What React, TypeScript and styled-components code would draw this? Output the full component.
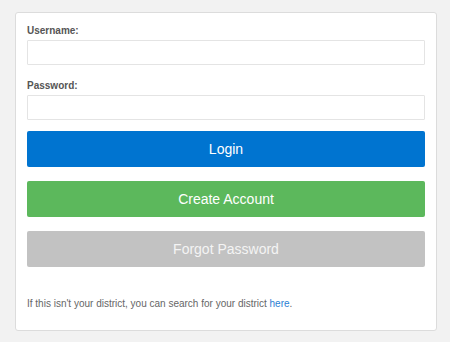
import styled, { createGlobalStyle } from "styled-components";

const GlobalStyle = createGlobalStyle`
  html, body {
    margin: 0;
    padding: 0;
    background: #f2f2f2;
    font-family: "Liberation Sans", Arial, Helvetica, sans-serif;
  }
`;

const Page = styled.div`
  padding: 12px 13px 12px 15px;
`;

const Card = styled.form`
  background: #fff;
  border: 1px solid #dcdcdc;
  border-radius: 3px;
  padding: 12px 11px 20px 11px;
  display: flex;
  flex-direction: column;
`;

const Label = styled.label`
  display: block;
  font-size: 10px;
  line-height: 12px;
  font-weight: bold;
  color: #555;
  margin-bottom: 3px;
`;

const Field = styled.div`
  display: flex;
  flex-direction: column;
  margin-bottom: 15px;

  &:last-of-type {
    margin-bottom: 11px;
  }
`;

const Input = styled.input`
  box-sizing: border-box;
  height: 25px;
  width: 100%;
  border: 1px solid #e4e4e4;
  border-radius: 1px;
  background: #fff;
  outline: none;
`;

const Button = styled.button<{ $bg: string; $fg: string }>`
  box-sizing: border-box;
  height: 36px;
  width: 100%;
  margin-bottom: 14px;
  border: none;
  border-radius: 2px;
  background: ${(p) => p.$bg};
  color: ${(p) => p.$fg};
  font-family: "Liberation Sans", Arial, sans-serif;
  font-size: 14px;
  cursor: pointer;
`;

const Note = styled.p`
  margin: 17px 0 0 0;
  font-size: 10px;
  line-height: 12px;
  color: #666;

  a {
    color: #2a7fd4;
    text-decoration: none;
  }
`;

const App = () => {
  return (
    <>
      <GlobalStyle />
      <Page>
        <Card>
          <Field>
            <Label>Username:</Label>
            <Input type="text" />
          </Field>
          <Field>
            <Label>Password:</Label>
            <Input type="password" />
          </Field>
          <Button type="button" $bg="#0074d0" $fg="#fff">
            Login
          </Button>
          <Button type="button" $bg="#5cb85c" $fg="#fff">
            Create Account
          </Button>
          <Button type="button" $bg="#c2c2c2" $fg="#f4f4f4">
            Forgot Password
          </Button>
          <Note>
            If this isn't your district, you can search for your district{" "}
            <a href="#">here</a>.
          </Note>
        </Card>
      </Page>
    </>
  );
};

export default App;
